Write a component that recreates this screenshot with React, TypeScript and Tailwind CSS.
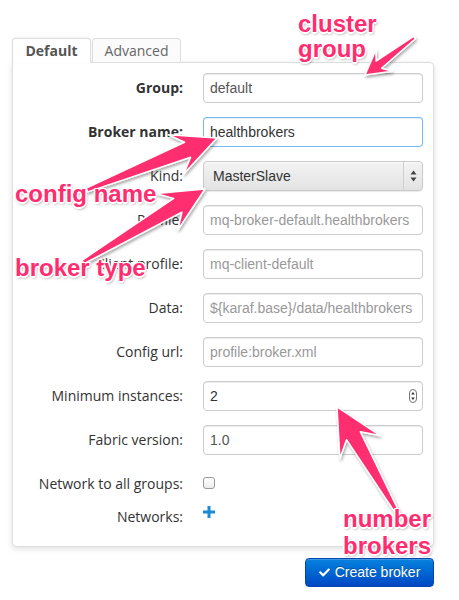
import React from "react";
import { FaCheck } from "react-icons/fa";

type Pt = [number, number];

function arrowPoints(P: Pt, T: Pt, headLen: number, headW: number, neckW: number, tailW: number): string {
  const dx = T[0] - P[0];
  const dy = T[1] - P[1];
  const L = Math.hypot(dx, dy);
  const ux = dx / L;
  const uy = dy / L;
  const nx = -uy;
  const ny = ux;
  const pt = (a: number, b: number) => `${(P[0] + ux * a + nx * b).toFixed(1)},${(P[1] + uy * a + ny * b).toFixed(1)}`;
  const neck = headLen * 0.72;
  return [
    pt(0, 0),
    pt(headLen, headW),
    pt(neck, neckW),
    pt(L, tailW),
    pt(L, -tailW),
    pt(neck, -neckW),
    pt(headLen, -headW),
  ].join(" ");
}

const arrows: { P: Pt; T: Pt; h: number; w: number; n: number; t: number }[] = [
  { P: [365, 75], T: [414.5, 37.5], h: 24, w: 13.5, n: 4.5, t: 1.5 },
  { P: [217, 138], T: [87, 190], h: 44, w: 21, n: 8, t: 2 },
  { P: [205, 189], T: [83, 262], h: 44, w: 21, n: 8, t: 2 },
  { P: [337, 407], T: [397, 512], h: 46, w: 23, n: 8, t: 2 },
];

const labelCls =
  "w-[170px] shrink-0 text-right text-[14px] leading-[20px] text-[#333] font-['Open_Sans',sans-serif]";
const inputBase =
  "w-[220px] h-[30px] shrink-0 flex items-center px-[6px] rounded-[4px] border border-[#ccc] bg-white shadow-[inset_0_1px_1px_rgba(0,0,0,0.075)] text-[14px] font-['Liberation_Sans',Arial,sans-serif] whitespace-nowrap overflow-hidden";

function Row({ label, bold, children }: { label: string; bold?: boolean; children: React.ReactNode }) {
  return (
    <div className="flex items-center h-[30px] gap-[20px]">
      <div className={labelCls + (bold ? " font-bold" : "")}>{label}</div>
      {children}
    </div>
  );
}

const annoText =
  "absolute text-[24px] leading-[25px] font-bold text-[#ff2d6f] font-['Liberation_Sans',Arial,sans-serif] whitespace-nowrap [text-shadow:-1px_-1px_0_#fff,1px_-1px_0_#fff,-1px_1px_0_#fff,1px_1px_0_#fff,0_-1.5px_0_#fff,0_1.5px_0_#fff,-1.5px_0_0_#fff,1.5px_0_0_#fff,1px_2px_3px_rgba(0,0,0,0.45)]";

export default function App() {
  return (
    <div className="relative w-[459px] h-[600px] bg-white overflow-hidden">
      <div className="pl-[12px] pt-[38px]">
        <div className="w-[422px]">
          {/* Tabs */}
          <div className="flex gap-[1px] font-['Open_Sans',sans-serif] text-[14px]">
            <div className="relative z-10 -mb-px w-[79px] h-[25px] pb-[1px] flex items-center justify-center bg-white border border-b-0 border-[#ddd] rounded-t-[4px] font-bold text-[#555] shadow-[0_-1px_3px_rgba(0,0,0,0.06)]">
              Default
            </div>
            <div className="w-[89px] h-[24px] flex items-center justify-center bg-[#fbfbfb] border border-b-0 border-[#ddd] rounded-t-[4px] text-[#666]">
              Advanced
            </div>
          </div>
          {/* Panel */}
          <div className="border border-[#ddd] rounded-b-[4px] rounded-tr-[4px] bg-white shadow-[0_2px_6px_rgba(0,0,0,0.12)] pt-[10px] pb-[19px]">
            <div className="flex flex-col gap-[14px]">
              <Row label="Group:" bold>
                <div className={inputBase + " text-[#555]"}>default</div>
              </Row>
              <Row label="Broker name:" bold>
                <div className={inputBase + " text-[#333] border-[rgba(82,168,236,0.8)] shadow-[inset_0_1px_1px_rgba(0,0,0,0.075),0_0_6px_rgba(82,168,236,0.6)]"}>
                  healthbrokers
                </div>
              </Row>
              <Row label="Kind:">
                <div className="w-[220px] h-[30px] shrink-0 flex items-stretch rounded-[4px] border border-[#c9c9c9] bg-gradient-to-b from-[#f3f3f3] to-[#e3e3e3] shadow-[inset_0_1px_0_rgba(255,255,255,0.7),0_1px_1px_rgba(0,0,0,0.08)] text-[14px] text-[#333] font-['Liberation_Sans',Arial,sans-serif]">
                  <div className="flex-1 flex items-center pl-[9px]">MasterSlave</div>
                  <div className="w-[19px] border-l border-[#cfcfcf] flex items-center justify-center">
                    <svg width="7" height="12" viewBox="0 0 7 12">
                      <polygon points="3.5,0.5 6.5,4.5 0.5,4.5" fill="#444" />
                      <polygon points="0.5,7.5 6.5,7.5 3.5,11.5" fill="#444" />
                    </svg>
                  </div>
                </div>
              </Row>
              <Row label="Profile:">
                <div className={inputBase + " text-[#999]"}>mq-broker-default.healthbrokers</div>
              </Row>
              <Row label="Client profile:">
                <div className={inputBase + " text-[#999]"}>mq-client-default</div>
              </Row>
              <Row label="Data:">
                <div className={inputBase + " text-[#999]"}>{"${karaf.base}/data/healthbrokers"}</div>
              </Row>
              <Row label="Config url:">
                <div className={inputBase + " text-[#999]"}>profile:broker.xml</div>
              </Row>
              <Row label="Minimum instances:">
                <div className={inputBase + " text-[#333] justify-between pr-[5px]"}>
                  <span>2</span>
                  <svg width="8" height="14" viewBox="0 0 8 14">
                    <rect x="0.5" y="0.5" width="7" height="13" rx="3.5" fill="#fdfdfd" stroke="#777" />
                    <polygon points="4,3 5.8,5.6 2.2,5.6" fill="#333" />
                    <polygon points="2.2,8.4 5.8,8.4 4,11" fill="#333" />
                  </svg>
                </div>
              </Row>
              <Row label="Fabric version:">
                <div className={inputBase + " text-[#555] bg-[#eee]"}>1.0</div>
              </Row>
              <Row label="Network to all groups:">
                <div className="w-[12px] h-[12px] rounded-[3px] border border-[#999] bg-gradient-to-b from-white to-[#ececec] -mt-[2px]" />
              </Row>
            </div>
            <div className="flex items-start gap-[20px] mt-[8px] h-[20px]">
              <div className={labelCls}>Networks:</div>
              <svg width="12" height="12" viewBox="0 0 12 12" className="mt-[-1px]">
                <rect x="4.5" y="0" width="3" height="12" fill="#1a8ad4" />
                <rect x="0" y="4.5" width="12" height="3" fill="#1a8ad4" />
              </svg>
            </div>
          </div>
          {/* Button */}
          <div className="flex justify-end mt-[11px]">
            <div className="w-[129px] h-[29px] flex items-center justify-center gap-[5px] rounded-[4px] border border-[#0545b0] bg-gradient-to-b from-[#0a82de] to-[#0247c4] text-white text-[14px] font-['Liberation_Sans',Arial,sans-serif] [text-shadow:0_-1px_0_rgba(0,0,0,0.25)] shadow-[inset_0_1px_0_rgba(255,255,255,0.2)]">
              <FaCheck className="w-[11px] h-[11px]" />
              <span>Create broker</span>
            </div>
          </div>
        </div>
      </div>

      {/* Annotations */}
      <svg className="absolute left-0 top-0 pointer-events-none" width="459" height="600" viewBox="0 0 459 600">
        <defs>
          <filter id="sh" x="-20%" y="-20%" width="140%" height="140%">
            <feDropShadow dx="1" dy="2" stdDeviation="1.5" floodColor="#000" floodOpacity="0.35" />
          </filter>
        </defs>
        {arrows.map((a, i) => (
          <polygon
            key={i}
            points={arrowPoints(a.P, a.T, a.h, a.w, a.n, a.t)}
            fill="#ff2d6f"
            stroke="#fff"
            strokeWidth="1.5"
            strokeLinejoin="round"
            filter="url(#sh)"
          />
        ))}
      </svg>
      <div className={annoText + " left-[298px] top-[11px]"}>
        cluster
        <br />
        group
      </div>
      <div className={annoText + " left-[15px] top-[181px]"}>config name</div>
      <div className={annoText + " left-[15px] top-[255px]"}>broker type</div>
      <div className={annoText + " left-[343px] top-[505px] leading-[27px]"}>
        number
        <br />
        brokers
      </div>
    </div>
  );
}
